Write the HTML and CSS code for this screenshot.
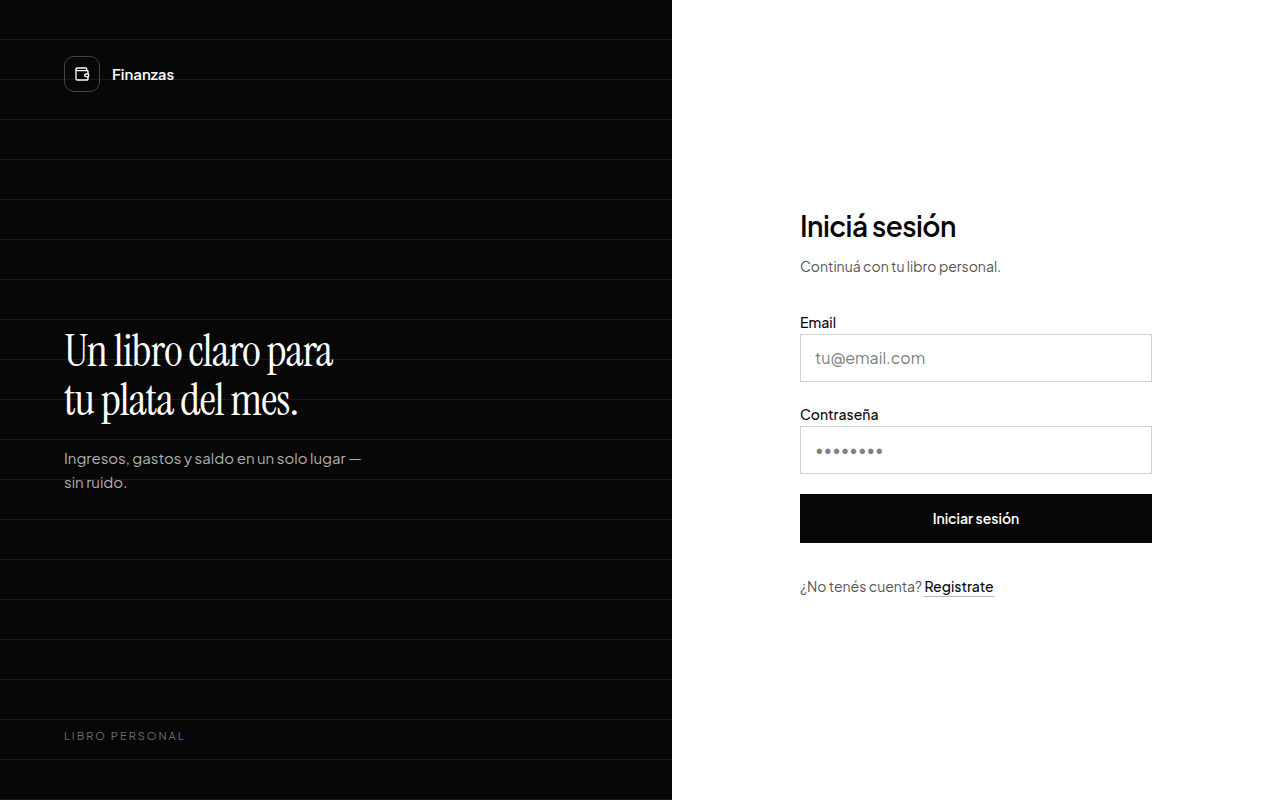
FILE: index.html
```html
<!DOCTYPE html>
<html lang="es">
<head>
    <meta charset="UTF-8">
    <meta name="viewport" content="width=device-width, initial-scale=1.0">
    <title>Finanzas - Iniciá sesión</title>
    <link rel="stylesheet" href="styles.css">
</head>
<body>
    <div class="auth">
        <aside class="brand-panel">
            <div class="brand">
                <span class="brand-mark">
                    <svg width="16" height="16" viewBox="0 0 24 24" fill="none" stroke="currentColor" stroke-width="2" stroke-linecap="round" stroke-linejoin="round" aria-hidden="true">
                        <path d="M19 7V4a1 1 0 0 0-1-1H5a2 2 0 0 0 0 4h15a1 1 0 0 1 1 1v4h-3a2 2 0 0 0 0 4h3a1 1 0 0 0 1-1v-2a1 1 0 0 0-1-1"/>
                        <path d="M3 5v14a2 2 0 0 0 2 2h15a1 1 0 0 0 1-1v-4"/>
                    </svg>
                </span>
                <span class="brand-name">Finanzas</span>
            </div>
            <div class="pitch">
                <h2>Un libro claro para<br>tu plata del mes.</h2>
                <p>Ingresos, gastos y saldo en un solo lugar —<br>sin ruido.</p>
            </div>
            <p class="brand-foot">Libro personal</p>
        </aside>

        <main class="form-panel">
            <div class="form-box">
                <h1>Iniciá sesión</h1>
                <p class="subtitle">Continuá con tu libro personal.</p>
                <form>
                    <div class="field">
                        <label for="email">Email</label>
                        <input type="email" id="email" placeholder="tu@email.com">
                    </div>
                    <div class="field">
                        <label for="password">Contraseña</label>
                        <input type="password" id="password" placeholder="••••••••">
                    </div>
                    <button type="submit">Iniciar sesión</button>
                </form>
                <p class="switch">¿No tenés cuenta? <a href="#registro">Registrate</a></p>
            </div>
        </main>
    </div>
</body>
</html>
```
FILE: styles.css
```css
* {
    box-sizing: border-box;
}
body {
    margin: 0;
    font-family: "Plus Jakarta Sans", Inter, sans-serif;
    font-size: 16px;
    line-height: 24px;
    color: #070707;
    background: #fff;
}
h1, h2, p {
    margin: 0;
}
h1, h2 {
    letter-spacing: -0.02em;
}
.auth {
    display: grid;
    grid-template-columns: 1.05fr 0.95fr;
    min-height: 100vh;
}

/* left side, ruled like a ledger page */
.brand-panel {
    display: flex;
    flex-direction: column;
    justify-content: space-between;
    padding: 56px 64px;
    color: #fff;
    background: repeating-linear-gradient(to bottom, transparent 0, transparent 39px, #1a1a1a 39px, #1a1a1a 40px) #070707;
}
.brand {
    display: flex;
    align-items: center;
    gap: 12px;
}
.brand-mark {
    display: flex;
    align-items: center;
    justify-content: center;
    width: 36px;
    height: 36px;
    border: 1px solid #444;
    border-radius: 10px;
}
.brand-name {
    font-size: 15px;
    font-weight: 600;
}
.pitch h2 {
    font-family: "Instrument Serif", "Liberation Serif", serif;
    font-size: 45px;
    font-weight: 400;
    line-height: 49px;
}
.pitch p {
    margin-top: 22px;
    font-size: 15px;
    color: #b0b0b0;
}
.brand-foot {
    font-size: 11px;
    line-height: 16px;
    letter-spacing: 2px;
    text-transform: uppercase;
    color: #6e6e6e;
}

.form-panel {
    display: flex;
    align-items: center;
    justify-content: center;
    padding: 32px;
}
.form-box {
    width: 100%;
    max-width: 352px;
}
.form-box h1 {
    font-size: 28px;
    font-weight: 600;
    line-height: 44px;
}
.subtitle {
    margin-top: 8px;
    font-size: 14px;
    line-height: 21px;
    color: #555;
}
form {
    display: flex;
    flex-direction: column;
    gap: 20px;
    margin-top: 33px;
}
.field {
    display: flex;
    flex-direction: column;
}
label {
    font-size: 14px;
    line-height: 24px;
    font-weight: 500;
}
input {
    width: 100%;
    padding: 12px 14px;
    border: 1px solid #d0d0d0;
    border-radius: 0;
    font: inherit;
    line-height: 22px;
    color: inherit;
    background: #fff;
}
input::placeholder {
    color: #808080;
}
button {
    padding: 14px 20px;
    border: none;
    font: inherit;
    font-size: 14px;
    font-weight: 600;
    line-height: 21px;
    color: #fff;
    background: #070707;
    cursor: pointer;
}
.switch {
    margin-top: 32px;
    font-size: 14px;
    line-height: 22px;
    color: #555;
}
.switch a {
    padding-bottom: 1px;
    font-weight: 500;
    color: #070707;
    text-decoration: none;
    border-bottom: 1px solid #b8b8b8;
}
```
